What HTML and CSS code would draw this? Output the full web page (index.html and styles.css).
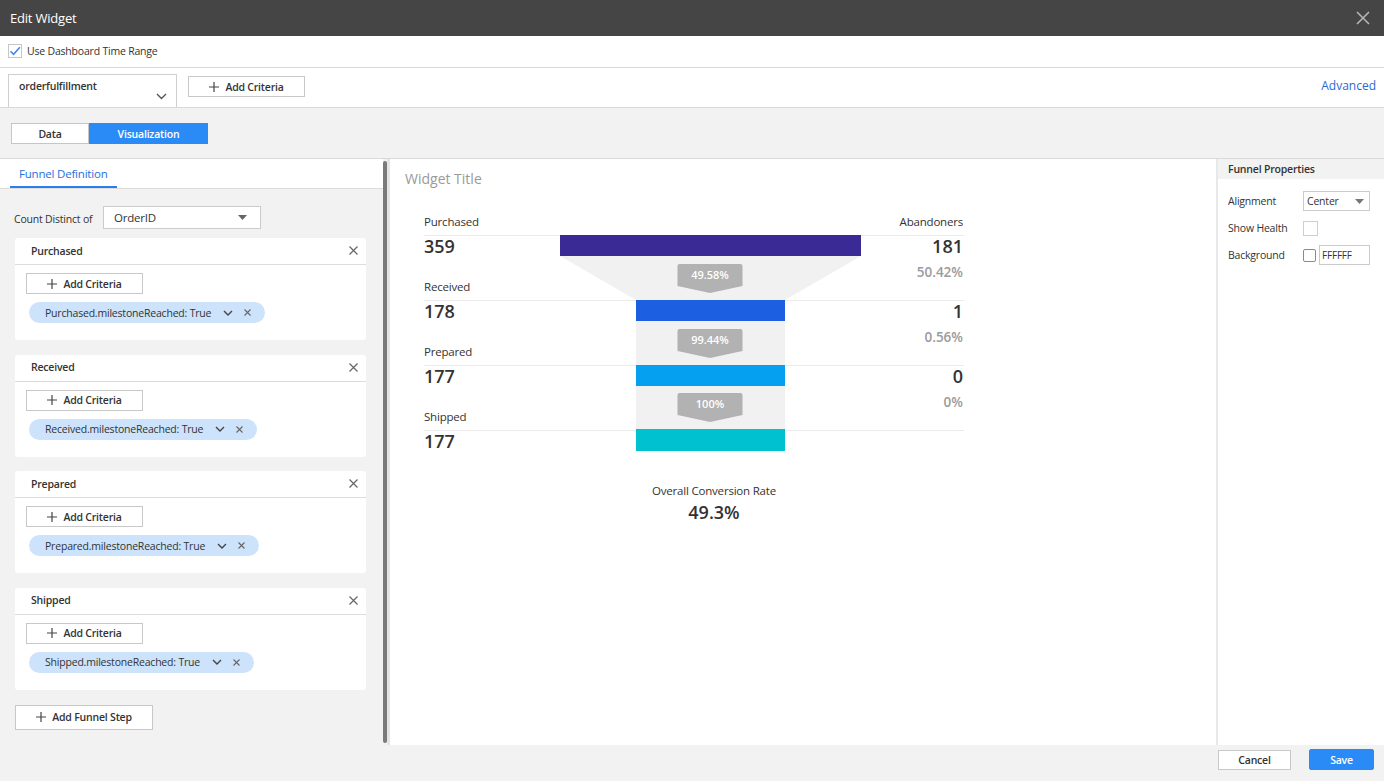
FILE: index.html
```html
<!DOCTYPE html>
<html>
<head>
<meta charset="utf-8">
<link rel="stylesheet" href="styles.css">
</head>
<body>
<div class="modal">
  <header class="titlebar">
    <span class="title">Edit Widget</span>
    <svg class="close" width="14" height="14" viewBox="0 0 14 14"><path d="M1 1L13 13M13 1L1 13" stroke="#b5b5b5" stroke-width="1.6" fill="none"/></svg>
  </header>

  <div class="timerow">
    <span class="cbox"><svg width="12" height="12" viewBox="0 0 12 12"><path d="M1.5 6.2L4.6 9.3L10.8 2.2" stroke="#3d86e8" stroke-width="1.5" fill="none"/></svg></span>
    <span>Use Dashboard Time Range</span>
  </div>

  <div class="criteriarow">
    <div class="source-select">
      <span>orderfulfillment</span>
      <svg width="11" height="7" viewBox="0 0 11 7"><path d="M1 1L5.5 5.5L10 1" stroke="#555" stroke-width="1.4" fill="none"/></svg>
    </div>
    <button class="btn add-crit"><svg class="plus" width="10" height="10" viewBox="0 0 10 10"><path d="M5 0V10M0 5H10" stroke="#444" stroke-width="1.2"/></svg>Add Criteria</button>
    <a class="advanced">Advanced</a>
  </div>

  <div class="tabsrow">
    <div class="seg">
      <span class="seg-item">Data</span>
      <span class="seg-item active">Visualization</span>
    </div>
  </div>

  <div class="workspace">
    <aside class="left">
      <div class="left-inner">
        <div class="left-tabs"><span class="ltab">Funnel Definition</span></div>
        <div class="left-body">
          <div class="count-row">
            <span class="count-label">Count Distinct of</span>
            <div class="dd">
              <span>OrderID</span>
              <svg width="9" height="5" viewBox="0 0 9 5"><path d="M0 0H9L4.5 5Z" fill="#666"/></svg>
            </div>
          </div>

          <div class="card">
            <div class="card-head"><span>Purchased</span><svg width="9" height="9" viewBox="0 0 9 9"><path d="M0.5 0.5L8.5 8.5M8.5 0.5L0.5 8.5" stroke="#666" stroke-width="1.2"/></svg></div>
            <div class="card-body">
              <button class="btn crit"><svg class="plus" width="10" height="10" viewBox="0 0 10 10"><path d="M5 0V10M0 5H10" stroke="#444" stroke-width="1.2"/></svg>Add Criteria</button>
              <div class="pill"><span>Purchased.milestoneReached: True</span><svg class="pchev" width="10" height="6" viewBox="0 0 10 6"><path d="M1 1L5 5L9 1" stroke="#444" stroke-width="1.4" fill="none"/></svg><svg width="7" height="7" viewBox="0 0 7 7"><path d="M0.5 0.5L6.5 6.5M6.5 0.5L0.5 6.5" stroke="#666" stroke-width="1.1"/></svg></div>
            </div>
          </div>

          <div class="card">
            <div class="card-head"><span>Received</span><svg width="9" height="9" viewBox="0 0 9 9"><path d="M0.5 0.5L8.5 8.5M8.5 0.5L0.5 8.5" stroke="#666" stroke-width="1.2"/></svg></div>
            <div class="card-body">
              <button class="btn crit"><svg class="plus" width="10" height="10" viewBox="0 0 10 10"><path d="M5 0V10M0 5H10" stroke="#444" stroke-width="1.2"/></svg>Add Criteria</button>
              <div class="pill"><span>Received.milestoneReached: True</span><svg class="pchev" width="10" height="6" viewBox="0 0 10 6"><path d="M1 1L5 5L9 1" stroke="#444" stroke-width="1.4" fill="none"/></svg><svg width="7" height="7" viewBox="0 0 7 7"><path d="M0.5 0.5L6.5 6.5M6.5 0.5L0.5 6.5" stroke="#666" stroke-width="1.1"/></svg></div>
            </div>
          </div>

          <div class="card">
            <div class="card-head"><span>Prepared</span><svg width="9" height="9" viewBox="0 0 9 9"><path d="M0.5 0.5L8.5 8.5M8.5 0.5L0.5 8.5" stroke="#666" stroke-width="1.2"/></svg></div>
            <div class="card-body">
              <button class="btn crit"><svg class="plus" width="10" height="10" viewBox="0 0 10 10"><path d="M5 0V10M0 5H10" stroke="#444" stroke-width="1.2"/></svg>Add Criteria</button>
              <div class="pill"><span>Prepared.milestoneReached: True</span><svg class="pchev" width="10" height="6" viewBox="0 0 10 6"><path d="M1 1L5 5L9 1" stroke="#444" stroke-width="1.4" fill="none"/></svg><svg width="7" height="7" viewBox="0 0 7 7"><path d="M0.5 0.5L6.5 6.5M6.5 0.5L0.5 6.5" stroke="#666" stroke-width="1.1"/></svg></div>
            </div>
          </div>

          <div class="card">
            <div class="card-head"><span>Shipped</span><svg width="9" height="9" viewBox="0 0 9 9"><path d="M0.5 0.5L8.5 8.5M8.5 0.5L0.5 8.5" stroke="#666" stroke-width="1.2"/></svg></div>
            <div class="card-body">
              <button class="btn crit"><svg class="plus" width="10" height="10" viewBox="0 0 10 10"><path d="M5 0V10M0 5H10" stroke="#444" stroke-width="1.2"/></svg>Add Criteria</button>
              <div class="pill"><span>Shipped.milestoneReached: True</span><svg class="pchev" width="10" height="6" viewBox="0 0 10 6"><path d="M1 1L5 5L9 1" stroke="#444" stroke-width="1.4" fill="none"/></svg><svg width="7" height="7" viewBox="0 0 7 7"><path d="M0.5 0.5L6.5 6.5M6.5 0.5L0.5 6.5" stroke="#666" stroke-width="1.1"/></svg></div>
            </div>
          </div>

          <button class="btn add-step"><svg class="plus" width="10" height="10" viewBox="0 0 10 10"><path d="M5 0V10M0 5H10" stroke="#444" stroke-width="1.2"/></svg>Add Funnel Step</button>
        </div>
      </div>
      <div class="scroll-col"><div class="thumb"></div></div>
      <div class="strip"></div>
    </aside>

    <main class="center">
      <div class="widget-title">Widget Title</div>
      <div class="funnel">
        <div class="f-head"><span>Purchased</span><span>Abandoners</span></div>
        <div class="stage">
          <div class="s-top"><span class="num">359</span><span class="num">181</span></div>
          <div class="s-bot"><span class="next-label">Received</span><span class="pct">50.42%</span></div>
        </div>
        <div class="stage">
          <div class="s-top"><span class="num">178</span><span class="num">1</span></div>
          <div class="s-bot"><span class="next-label">Prepared</span><span class="pct">0.56%</span></div>
        </div>
        <div class="stage">
          <div class="s-top"><span class="num">177</span><span class="num">0</span></div>
          <div class="s-bot"><span class="next-label">Shipped</span><span class="pct">0%</span></div>
        </div>
        <div class="stage last">
          <div class="s-top"><span class="num">177</span></div>
        </div>
        <svg class="funnel-graphic" width="301" height="216" viewBox="0 0 301 216">
          <polygon points="0,21 301,21 225,65 76,65" fill="#f1f1f1"/>
          <rect x="76" y="86" width="149" height="44" fill="#f1f1f1"/>
          <rect x="76" y="151" width="149" height="43" fill="#f1f1f1"/>
          <rect x="0" y="0" width="301" height="21" fill="#3a2a96"/>
          <rect x="76" y="65" width="149" height="21" fill="#1c5fe0"/>
          <rect x="76" y="130" width="149" height="21" fill="#05a0f0"/>
          <rect x="76" y="194" width="149" height="22" fill="#00c1cf"/>
          <path d="M119.5 29H180.5A2 2 0 0 1 182.5 31V51L150 58L117.5 51V31A2 2 0 0 1 119.5 29Z" fill="#b2b2b2"/>
          <path d="M119.5 94H180.5A2 2 0 0 1 182.5 96V116L150 123L117.5 116V96A2 2 0 0 1 119.5 94Z" fill="#b2b2b2"/>
          <path d="M119.5 158H180.5A2 2 0 0 1 182.5 160V180L150 187L117.5 180V160A2 2 0 0 1 119.5 158Z" fill="#b2b2b2"/>
          <text x="150" y="44" class="badge-t">49.58%</text>
          <text x="150" y="109" class="badge-t">99.44%</text>
          <text x="150" y="173" class="badge-t">100%</text>
        </svg>
      </div>
      <div class="overall">
        <div class="ov-label">Overall Conversion Rate</div>
        <div class="ov-val">49.3%</div>
      </div>
    </main>

    <aside class="right">
      <div class="r-head">Funnel Properties</div>
      <div class="r-rows">
        <div class="r-row">
          <span class="r-label">Alignment</span>
          <div class="r-select"><span>Center</span><svg width="9" height="5" viewBox="0 0 9 5"><path d="M0 0H9L4.5 5Z" fill="#777"/></svg></div>
        </div>
        <div class="r-row">
          <span class="r-label">Show Health</span>
          <span class="r-check"></span>
        </div>
        <div class="r-row">
          <span class="r-label">Background</span>
          <span class="r-swatch"></span>
          <span class="r-input">FFFFFF</span>
        </div>
      </div>
    </aside>
  </div>

  <footer class="footer">
    <button class="btn cancel">Cancel</button>
    <button class="btn save">Save</button>
  </footer>
</div>
</body>
</html>
```

FILE: styles.css
```css
* { box-sizing: border-box; }
body {
  margin: 0;
  font-family: "Open Sans", "Liberation Sans", sans-serif;
  color: #333;
  background: #f2f2f2;
  letter-spacing: -0.2px;
}
.modal {
  width: 1384px;
  height: 781px;
  display: flex;
  flex-direction: column;
  overflow: hidden;
}
.titlebar {
  height: 36px;
  flex: none;
  background: #454545;
  color: #fff;
  display: flex;
  align-items: center;
  justify-content: space-between;
  padding: 0 14px 0 10px;
  font-size: 13px;
}
.timerow {
  height: 32px;
  flex: none;
  background: #fff;
  border-bottom: 1px solid #d9d9d9;
  display: flex;
  align-items: center;
  gap: 5px;
  padding: 0 0 2px 8px;
  font-size: 10.5px;
}
.cbox {
  width: 14px;
  height: 14px;
  border: 1px solid #c6c6c6;
  display: flex;
  align-items: center;
  justify-content: center;
  background: #fff;
}
.criteriarow {
  height: 40px;
  flex: none;
  background: #fff;
  border-bottom: 1px solid #d9d9d9;
  display: flex;
  align-items: flex-start;
  padding: 6px 8px 0 8px;
}
.source-select {
  width: 169px;
  height: 33px;
  border: 1px solid #cfcfcf;
  border-bottom: none;
  display: flex;
  flex-direction: column;
  padding: 3px 0 0 10px;
  font-size: 10.5px;
  font-weight: 600;
  line-height: 16px;
}
.source-select svg {
  align-self: flex-end;
  margin: -1px 9px 0 0;
}
.btn {
  font-family: inherit;
  letter-spacing: -0.2px;
  background: #fff;
  border: 1px solid #c8c8c8;
  color: #333;
  font-size: 10.5px;
  font-weight: 600;
  display: flex;
  align-items: center;
  justify-content: center;
  padding: 0;
  cursor: pointer;
}
.btn .plus { margin-right: 6px; }
.add-crit {
  width: 117px;
  height: 21px;
  margin: 2px 0 0 11px;
}
.advanced {
  margin: 4px 0 0 auto;
  font-size: 12px;
  line-height: 16px;
  letter-spacing: 0;
  color: #2b68d6;
}
.tabsrow {
  height: 51px;
  flex: none;
  padding: 15px 0 0 11px;
  border-bottom: 1px solid #dadada;
}
.seg { display: flex; }
.seg-item {
  height: 21px;
  line-height: 20px;
  font-size: 10.5px;
  font-weight: 600;
  text-align: center;
  border: 1px solid #c6c6c6;
  background: #fff;
  width: 78px;
}
.seg-item.active {
  width: 119px;
  background: #2b8bf6;
  border-color: #2b8bf6;
  color: #fff;
}
.workspace {
  flex: 1;
  display: flex;
  min-height: 0;
}
.left {
  width: 390px;
  flex: none;
  display: flex;
}
.left-inner {
  width: 383px;
  display: flex;
  flex-direction: column;
}
.left-tabs {
  height: 30px;
  background: #fff;
  border-bottom: 1px solid #dcdcdc;
  padding-left: 10px;
}
.ltab {
  display: inline-block;
  height: 29px;
  padding: 7px 9px 0 9px;
  border-bottom: 2px solid #2b7de9;
  color: #2470dc;
  font-size: 11.5px;
  line-height: 16px;
}
.left-body {
  padding: 17px 0 0 15px;
  display: flex;
  flex-direction: column;
  align-items: flex-start;
}
.count-row {
  display: flex;
  align-items: center;
  margin-left: -1px;
  height: 23px;
}
.count-label {
  width: 89px;
  font-size: 10.5px;
  padding-top: 2px;
}
.dd {
  width: 158px;
  height: 23px;
  border: 1px solid #cbcbcb;
  background: #fff;
  display: flex;
  align-items: center;
  justify-content: space-between;
  padding: 0 13px 0 10px;
  font-size: 11.5px;
}
.card {
  width: 351px;
  background: #fff;
  border-radius: 3px;
  margin-top: 9px;
}
.card + .card { margin-top: 14.5px; }
.card-head {
  height: 27px;
  border-bottom: 1px solid #dcdcdc;
  display: flex;
  align-items: center;
  justify-content: space-between;
  padding: 0 8px 1px 16px;
  font-size: 10.5px;
  font-weight: 600;
}
.card-body {
  padding: 8px 0 17px 11px;
}
.crit {
  width: 117px;
  height: 21px;
}
.pill {
  margin: 8px 0 0 3px;
  height: 21px;
  display: inline-flex;
  align-items: center;
  background: #cce3fb;
  border-radius: 11px;
  padding: 0 14px 0 16px;
  font-size: 10.5px;
}
.pill .pchev { margin: 0 11px 0 12px; }
.add-step {
  width: 138px;
  height: 25px;
  margin-top: 15px;
}
.scroll-col {
  width: 4px;
  padding: 2px 0;
}
.thumb {
  height: 100%;
  background: #7a7a7a;
  border-radius: 2px;
}
.strip {
  width: 3px;
  background: #e4e4e4;
}
.center {
  flex: 1;
  background: #fff;
  border-right: 2px solid #e8e8e8;
  padding: 10px 0 0 0;
}
.widget-title {
  padding-left: 15px;
  font-size: 14px;
  line-height: 20px;
  letter-spacing: 0;
  color: #9a9a9a;
}
.funnel {
  position: relative;
  width: 540px;
  margin: 24px 0 0 34px;
}
.f-head {
  height: 22px;
  display: flex;
  justify-content: space-between;
  align-items: flex-end;
  padding: 0 1px 5px 0;
  font-size: 11.5px;
  line-height: 16px;
}
.stage {
  height: 65px;
  border-top: 1px solid #ebebeb;
}
.stage.last { height: 22px; }
.s-top {
  height: 21px;
  display: flex;
  justify-content: space-between;
  padding-right: 1px;
}
.num {
  font-size: 18px;
  font-weight: 600;
  line-height: 21px;
  letter-spacing: 0;
  color: #333;
}
.s-bot {
  height: 43px;
  display: flex;
  justify-content: space-between;
  padding-right: 1px;
}
.next-label {
  align-self: flex-end;
  font-size: 11.5px;
  line-height: 16px;
  padding-bottom: 5px;
}
.pct {
  align-self: flex-start;
  margin-top: 6px;
  font-size: 13.5px;
  font-weight: 600;
  line-height: 18px;
  letter-spacing: 0;
  color: #9b9b9b;
}
.funnel-graphic {
  position: absolute;
  left: 136px;
  top: 22px;
}
.badge-t {
  font-family: "Open Sans", "Liberation Sans", sans-serif;
  font-size: 11px;
  font-weight: 600;
  letter-spacing: 0;
  fill: #fff;
  text-anchor: middle;
}
.overall {
  width: 580px;
  margin: 31px 0 0 34px;
  text-align: center;
}
.ov-label {
  font-size: 11.5px;
  line-height: 16px;
}
.ov-val {
  margin-top: 2px;
  font-size: 18px;
  font-weight: 600;
  line-height: 22px;
  letter-spacing: 0;
}
.right {
  width: 166px;
  flex: none;
  background: #fff;
}
.r-head {
  height: 20px;
  background: #f2f2f2;
  padding: 1px 0 0 10px;
  font-size: 10.5px;
  font-weight: 600;
  line-height: 19px;
}
.r-rows {
  padding: 12px 0 0 10px;
  display: flex;
  flex-direction: column;
  gap: 7px;
}
.r-row {
  height: 20px;
  display: flex;
  align-items: center;
  font-size: 10.5px;
}
.r-label { width: 75px; }
.r-select {
  width: 67px;
  height: 20px;
  border: 1px solid #cbcbcb;
  display: flex;
  align-items: center;
  justify-content: space-between;
  padding: 0 5px 0 3px;
}
.r-check {
  width: 15px;
  height: 15px;
  border: 1px solid #cfcfcf;
}
.r-swatch {
  width: 13px;
  height: 13px;
  border: 1px solid #8a8a8a;
  border-radius: 2px;
  margin-right: 3px;
}
.r-input {
  width: 51px;
  height: 20px;
  border: 1px solid #cbcbcb;
  padding-left: 2px;
  font-size: 10px;
  line-height: 18px;
}
.footer {
  height: 36px;
  flex: none;
  display: flex;
  justify-content: flex-end;
  align-items: flex-start;
  padding: 5px 10px 0 0;
  gap: 18px;
}
.cancel {
  width: 73px;
  height: 20px;
}
.save {
  width: 65px;
  height: 21px;
  margin-top: -1px;
  background: #2b8bf6;
  border-color: #2b8bf6;
  color: #fff;
  border-radius: 2px;
}
```
